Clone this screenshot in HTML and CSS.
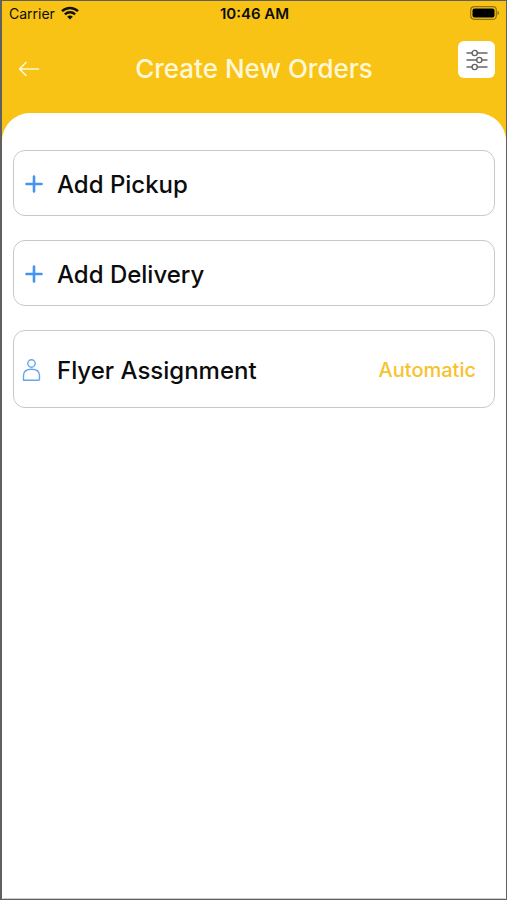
FILE: index.html
```html
<!DOCTYPE html>
<html lang="en">
<head>
<meta charset="utf-8">
<meta name="viewport" content="width=device-width, initial-scale=1">
<title>Create New Orders</title>
<link rel="stylesheet" href="styles.css">
</head>
<body>
<div class="screen">
  <div class="status">
    <div class="carrier">
      <span>Carrier</span>
      <svg width="18" height="14" viewBox="0 0 18 14" fill="none" stroke="#111" stroke-width="2.5" aria-hidden="true">
        <path d="M1 5.2C5.5.8 12.5.8 17 5.2"/>
        <path d="M3.9 8.3c2.9-2.8 7.3-2.8 10.2 0"/>
        <path d="M9 13.6 6.2 10.7c1.6-1.5 4-1.5 5.6 0z" fill="#111" stroke="none"/>
      </svg>
    </div>
    <span class="clock">10:46 AM</span>
    <svg class="battery" width="30" height="14" viewBox="0 0 30 14" aria-hidden="true">
      <rect x=".7" y=".7" width="25.6" height="12.6" rx="3.5" fill="none" stroke="#8f7310" stroke-width="1.2"/>
      <rect x="2.5" y="2.5" width="22" height="9" rx="2" fill="#000"/>
      <path d="M27.5 4.8c2 .7 2 3.7 0 4.4z" fill="#8f7310"/>
    </svg>
  </div>
  <header class="header">
    <button class="back" aria-label="Back">
      <svg width="22" height="16" viewBox="0 0 22 16" fill="none" stroke="#fff8d8" stroke-width="1.5" stroke-linecap="round" stroke-linejoin="round"><path d="M20.500 8H1.500M8 1.500 1.500 8 8 14.500"/></svg>
    </button>
    <h1>Create New Orders</h1>
    <button class="filter" aria-label="Filters">
      <svg width="22" height="22" viewBox="0 0 22 22" fill="none" stroke="#666" stroke-width="1.4" stroke-linecap="round"><path d="M1 4H6M11.500 4H21M1 11h9.500M16 11h5M1 18H6M11.500 18H21"/><circle cx="8.700" cy="4" r="2.600"/><circle cx="13.300" cy="11" r="2.600"/><circle cx="8.700" cy="18" r="2.600"/></svg>
    </button>
  </header>
  <main class="sheet">
    <button class="card">
      <svg class="icon" width="20" height="20" viewBox="0 0 20 20" fill="none" stroke="#4592f1" stroke-width="2.6" stroke-linecap="round"><path d="M10 2.500v15M2.500 10h15"/></svg>
      <span>Add Pickup</span>
    </button>
    <button class="card">
      <svg class="icon" width="20" height="20" viewBox="0 0 20 20" fill="none" stroke="#4592f1" stroke-width="2.6" stroke-linecap="round"><path d="M10 2.500v15M2.500 10h15"/></svg>
      <span>Add Delivery</span>
    </button>
    <button class="card tall">
      <svg class="icon" width="20" height="24" viewBox="0 0 20 24" fill="none" stroke="#66a3f0" stroke-width="1.4" stroke-linejoin="round"><circle cx="9.500" cy="5.500" r="3.700"/><path d="M1.500 22.300V17.500C1.500 13 4.500 11.300 9.500 11.300S17.500 13 17.500 17.500V21.200q0 1.100-1.100 1.100z"/></svg>
      <span>Flyer Assignment</span>
      <span class="value">Automatic</span>
    </button>
  </main>
</div>
</body>
</html>
```
FILE: styles.css
```css
* {
  box-sizing: border-box;
}

body {
  margin: 0;
  font-family: Inter, "Liberation Sans", sans-serif;
  color: #0c0c0c;
}

button {
  font: inherit;
  color: inherit;
  cursor: pointer;
}

svg {
  display: block;
  flex: none;
}

.screen {
  display: flex;
  flex-direction: column;
  min-height: 100vh;
  border: 2px solid #606060;
  border-width: 1px 1px 1px 2px;
  background: #f9c316;
}

.status {
  display: grid;
  grid-template-columns: 1fr auto 1fr;
  align-items: center;
  height: 24px;
  padding: 0 6px 0 7px;
  font-size: 14px;
}

.carrier {
  display: flex;
  align-items: center;
  gap: 6px;
}

.clock {
  font-size: 15px;
  font-weight: 600;
}

.battery {
  justify-self: end;
}

.header {
  display: grid;
  grid-template-columns: 40px 1fr 40px;
  align-items: start;
  height: 88px;
  padding: 16px 11px 0;
}

.back {
  display: grid;
  place-items: center;
  width: 32px;
  height: 56px;
  padding: 0;
  border: 0;
  background: none;
}

.header h1 {
  margin: 0;
  font-size: 26px;
  font-weight: 500;
  line-height: 56px;
  text-align: center;
  color: #fff8d8;
}

.filter {
  display: grid;
  place-items: center;
  justify-self: end;
  width: 37px;
  height: 37px;
  padding: 0;
  border: 0;
  border-radius: 6px;
  background: #fff;
}

.sheet {
  display: flex;
  flex: 1;
  flex-direction: column;
  gap: 24px;
  padding: 36px 10px;
  border-radius: 28px 28px 0 0;
  border: 1px solid #fff;
  border-bottom-color: #ccc;
  background: #fff;
}

.card {
  display: flex;
  align-items: center;
  gap: 13px;
  width: 100%;
  height: 66px;
  padding: 2px 18px 0 10px;
  border: 1px solid #c9c9c9;
  border-radius: 12px;
  background: #fff;
  font-size: 24px;
  font-weight: 500;
  text-align: left;
}

.tall {
  height: 78px;
  gap: 15px;
  padding-left: 8px;
}

.value {
  margin-left: auto;
  font-size: 20px;
  color: #f7c22f;
}
```
